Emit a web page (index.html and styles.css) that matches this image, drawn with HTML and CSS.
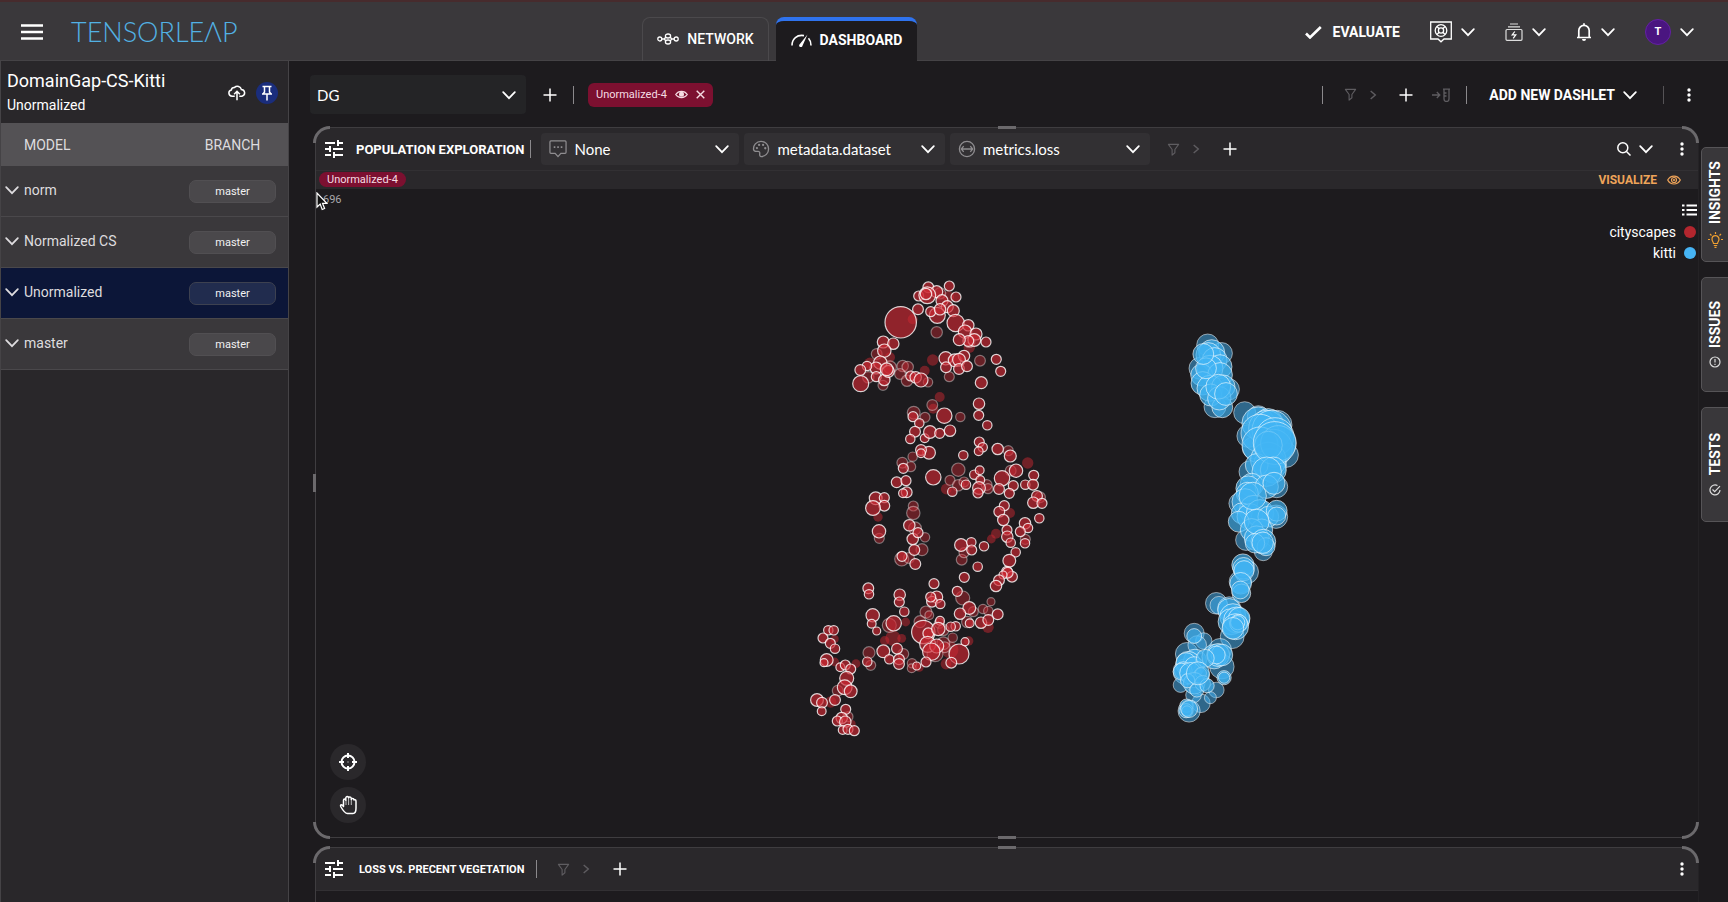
FILE: index.html
```html
<!DOCTYPE html>
<html lang="en">
<head>
<meta charset="utf-8">
<title>Tensorleap - Dashboard</title>
<link rel="stylesheet" href="styles.css">
</head>
<body>
<svg class="sprite" aria-hidden="true">
  <symbol id="chevron" viewBox="0 0 12 12"><path d="M1 3.500 6 8.700 11 3.500" fill="none" stroke="currentColor" stroke-width="1.500" stroke-linecap="round"/></symbol>
  <symbol id="next" viewBox="0 0 12 12"><path d="M4 2.500 8 6 4 9.500" fill="none" stroke="currentColor" stroke-width="1.200"/></symbol>
  <symbol id="plus" viewBox="0 0 14 14"><path d="M7 .5v13M.5 7h13" stroke="currentColor" stroke-width="1.500"/></symbol>
  <symbol id="dots" viewBox="0 0 14 14"><g fill="currentColor"><circle cx="7" cy="2" r="1.700"/><circle cx="7" cy="7" r="1.700"/><circle cx="7" cy="12" r="1.700"/></g></symbol>
  <symbol id="funnel" viewBox="0 0 14 14"><path d="M1.500 1.500h11L8.500 7v3.500L5.500 13V7z" fill="none" stroke="currentColor" stroke-width="1.200" stroke-linejoin="round"/></symbol>
  <symbol id="tune" viewBox="0 0 24 24"><path fill="currentColor" d="M3 17v2h6v-2H3zM3 5v2h10V5H3zm10 16v-2h8v-2h-8v-2h-2v6h2zM7 9v2H3v2h4v2h2V9H7zm14 4v-2H11v2h10zm-6-4h2V7h4V5h-4V3h-2v6z"/></symbol>
</svg>

<header class="topbar">
  <div class="brand">
    <button class="icon-button" aria-label="Menu"><svg width="22" height="16" viewBox="0 0 22 16"><path d="M0 1.500h22M0 8h22M0 14.500h22" stroke="#fff" stroke-width="2.400"/></svg></button>
    <a class="logo" href="#">TENSORLEΛP</a>
  </div>
  <nav class="tabs">
    <a class="tab" href="#">
      <svg width="22" height="12" viewBox="0 0 22 12" fill="none" stroke="currentColor" stroke-width="1.300"><circle cx="2.800" cy="6" r="2"/><circle cx="19.200" cy="6" r="2"/><ellipse cx="11" cy="3" rx="2.600" ry="2"/><ellipse cx="11" cy="9" rx="2.600" ry="2"/><path d="M4.800 6h2.500M17.200 6h-2.500M7.300 6 8.900 4M7.300 6l1.600 2M14.700 6l-1.600-2M14.700 6l-1.600 2"/></svg>
      NETWORK</a>
    <a class="tab tab-active" href="#">
      <svg width="21" height="14" viewBox="0 0 21 14" fill="none" stroke="currentColor" stroke-width="1.600"><path d="M1 12.500C1 5.500 6 1.500 13 2.600M17.500 5.300c1.700 1.800 2.500 4.200 2.500 7.200"/><path d="m16.500 1.500-7.800 9.700a1.700 1.700 0 1 0 2.800 1.500z" fill="currentColor" stroke="none"/></svg>
      DASHBOARD</a>
  </nav>
  <div class="top-actions">
    <button class="evaluate"><svg width="17" height="13" viewBox="0 0 17 13"><path d="m1 7.500 4 4L15.800 1" fill="none" stroke="#fff" stroke-width="2.600"/></svg>EVALUATE</button>
    <button class="menu-button" aria-label="Help"><svg width="22" height="22" viewBox="0 0 22 22" fill="none" stroke="#fff" stroke-width="1.300"><path d="M.7 1h20.600v17h-7.300L11 20.800 8 18H.7z"/><circle cx="11" cy="9.500" r="5.800"/><circle cx="11" cy="9.500" r="2.600"/><path d="m7 5.500 2.200 2.200M15 5.500l-2.200 2.200M7 13.500l2.200-2.200M15 13.500l-2.200-2.200"/></svg><svg class="chevron"><use href="#chevron"/></svg></button>
    <button class="menu-button" aria-label="Jobs"><svg width="18" height="18" viewBox="0 0 18 18" fill="none" stroke="#ddd" stroke-width="1.200"><path d="M5 1h8M3 3.800h12"/><rect x="1" y="6.500" width="16" height="10.800" rx="1"/><path d="m9.800 8.500-2.600 3.300h3.600l-2.600 3.500" stroke="#fff"/></svg><svg class="chevron"><use href="#chevron"/></svg></button>
    <button class="menu-button" aria-label="Notifications"><svg width="16" height="18" viewBox="0 0 16 18"><path d="M1 14.500h14M2.800 14.500V7.500a5.200 5.200 0 0 1 10.400 0v7M8 .3v2" fill="none" stroke="#fff" stroke-width="1.700"/><path d="M6 16h4a2 2 0 0 1-4 0z" fill="#fff"/></svg><svg class="chevron"><use href="#chevron"/></svg></button>
    <button class="menu-button" aria-label="Account"><span class="avatar">T</span><svg class="chevron"><use href="#chevron"/></svg></button>
  </div>
</header>

<div class="workspace">
  <aside class="sidebar">
    <div class="project">
      <div class="project-names"><h1>DomainGap-CS-Kitti</h1><p>Unormalized</p></div>
      <button class="icon-button" aria-label="Upload"><svg width="18" height="16" viewBox="0 0 20 17" fill="none" stroke="#fff" stroke-width="1.700"><path d="M7.500 12H4.500a3.500 3.500 0 0 1-.8-6.900A3.300 3.300 0 0 1 7.300 2.300a4.500 4.500 0 0 1 7.500 2.200 3.800 3.800 0 0 1 .7 7.500H12.500M10 16.500V7M6.800 9.800 10 6.600l3.200 3.200"/></svg></button>
      <button class="pin" aria-label="Pin"><svg width="12" height="16" viewBox="0 0 12 16" fill="none" stroke="#fff" stroke-width="1.500"><path d="M1.500 1.500h9M3.500 1.500v6M8.500 1.500v6M1 9h10M3.500 7 2 9M8.500 7 10 9M6 9v6.500"/></svg></button>
    </div>
    <table class="models">
      <thead><tr><th class="model-head">MODEL</th><th class="branch-cell">BRANCH</th></tr></thead>
      <tbody>
        <tr><td><button class="model"><svg class="chevron"><use href="#chevron"/></svg>norm</button></td><td class="branch-cell"><span class="branch">master</span></td></tr>
        <tr><td><button class="model"><svg class="chevron"><use href="#chevron"/></svg>Normalized CS</button></td><td class="branch-cell"><span class="branch">master</span></td></tr>
        <tr class="selected"><td><button class="model"><svg class="chevron"><use href="#chevron"/></svg>Unormalized</button></td><td class="branch-cell"><span class="branch">master</span></td></tr>
        <tr><td><button class="model"><svg class="chevron"><use href="#chevron"/></svg>master</button></td><td class="branch-cell"><span class="branch">master</span></td></tr>
      </tbody>
    </table>
  </aside>

  <main class="main">
    <div class="toolbar">
      <div class="select select-board"><select aria-label="Dashboard"><option>DG</option></select><svg class="chevron"><use href="#chevron"/></svg></div>
      <button class="icon-button" aria-label="Add dashboard"><svg class="glyph"><use href="#plus"/></svg></button>
      <span class="divider"></span>
      <span class="chip">Unormalized-4
        <button class="icon-button" aria-label="Toggle visibility"><svg width="13" height="9" viewBox="0 0 13 9"><path d="M.7 4.500C3.500.3 9.500.3 12.300 4.500 9.500 8.700 3.500 8.700.7 4.500z" fill="none" stroke="#f5dce3" stroke-width="1.200"/><circle cx="6.500" cy="4.200" r="2.500" fill="#f5dce3"/></svg></button>
        <button class="icon-button" aria-label="Remove"><svg width="9" height="9" viewBox="0 0 9 9"><path d="m.7.7 7.600 7.600M8.300.7.7 8.300" stroke="#f5dce3" stroke-width="1.400"/></svg></button>
      </span>
      <div class="toolbar-end">
        <span class="divider"></span>
        <button class="filter muted" aria-label="Filter"><svg class="funnel"><use href="#funnel"/></svg><svg class="chevron"><use href="#next"/></svg></button>
        <button class="icon-button" aria-label="Add filter"><svg class="glyph"><use href="#plus"/></svg></button>
        <button class="icon-button muted" aria-label="Create test"><svg width="18" height="14" viewBox="0 0 18 14" fill="none" stroke="currentColor" stroke-width="1.300"><path d="M0 7h7.500M4.800 4l3 3-3 3M11 1.200h7M12 1.500v9.500a2.400 2.400 0 0 0 5 0V1.500M12 5h2.500M12 8h2.500"/></svg></button>
        <span class="divider"></span>
        <button class="add-dashlet">ADD NEW DASHLET<svg class="chevron"><use href="#chevron"/></svg></button>
        <span class="divider divider-dim"></span>
        <button class="icon-button" aria-label="More"><svg class="glyph"><use href="#dots"/></svg></button>
      </div>
    </div>

    <div class="board">
      <div class="dashlets">
        <section class="dashlet dashlet-large">
          <span class="corner top-left"></span><span class="corner top-right"></span><span class="corner bottom-left"></span><span class="corner bottom-right"></span>
          <span class="grip grip-top"></span><span class="grip grip-bottom"></span><span class="grip-left"></span>
          <div class="dashlet-head">
            <button class="icon-button" aria-label="Settings"><svg class="tune"><use href="#tune"/></svg></button>
            <h2>POPULATION EXPLORATION</h2>
            <span class="divider"></span>
            <div class="fields">
              <div class="select"><svg class="field-icon" viewBox="0 0 19 19" fill="none" stroke="currentColor" stroke-width="1.300"><path d="M2 1h15a1 1 0 0 1 1 1v11a1 1 0 0 1-1 1h-4.500L9.500 17.500 6.500 14H2a1 1 0 0 1-1-1V2a1 1 0 0 1 1-1z"/><path d="M5 7.500h1.700M8.700 7.500h1.700M12.400 7.500h1.700" stroke-width="1.700"/></svg><select aria-label="Label"><option>None</option></select><svg class="chevron"><use href="#chevron"/></svg></div>
              <div class="select"><svg class="field-icon" viewBox="0 0 19 19" fill="none" stroke="currentColor" stroke-width="1.400"><path d="M9.500 17.500c-1.500-.2-1.500-2-1.300-3.300.2-1.500-.7-2.300-2-2.200-2 .2-4.200.3-4.500-1.800C1 5.500 4.700 1.500 9.500 1.500s8 3.500 8 8-3.500 8-8 8z"/><g fill="currentColor" stroke="none"><circle cx="5.200" cy="8.500" r="1.200"/><circle cx="7.500" cy="5.200" r="1.200"/><circle cx="11.700" cy="5.200" r="1.200"/><circle cx="14" cy="8.700" r="1.200"/></g></svg><select aria-label="Color"><option>metadata.dataset</option></select><svg class="chevron"><use href="#chevron"/></svg></div>
              <div class="select"><svg class="field-icon" viewBox="0 0 19 19" fill="none" stroke="currentColor" stroke-width="1.400"><circle cx="9.500" cy="9.500" r="8"/><path d="M4 9.500h11M6 6.500 3.500 9.500 6 12.500M13 6.500l2.500 3-2.500 3"/></svg><select aria-label="Size"><option>metrics.loss</option></select><svg class="chevron"><use href="#chevron"/></svg></div>
            </div>
            <button class="filter muted" aria-label="Filter"><svg class="funnel"><use href="#funnel"/></svg><svg class="chevron"><use href="#next"/></svg></button>
            <button class="icon-button" aria-label="Add filter"><svg class="glyph"><use href="#plus"/></svg></button>
            <div class="head-end">
              <button class="search" aria-label="Search"><svg width="14" height="14" viewBox="0 0 14 14"><g fill="none" stroke="#fff" stroke-width="1.500"><circle cx="5.800" cy="5.800" r="5"/><path d="m9.500 9.500 4 4"/></g></svg><svg class="chevron"><use href="#chevron"/></svg></button>
              <button class="icon-button" aria-label="More"><svg class="glyph"><use href="#dots"/></svg></button>
            </div>
          </div>
          <div class="dashlet-sub">
            <span class="chip chip-small">Unormalized-4</span>
            <button class="visualize">VISUALIZE<svg width="14" height="10" viewBox="0 0 14 10" fill="none" stroke="currentColor" stroke-width="1.200"><path d="M.7 5C3.500-.3 10.500-.3 13.300 5 10.500 10.300 3.500 10.300.7 5z"/><circle cx="7" cy="5" r="2.500"/><circle cx="7" cy="5" r=".5"/></svg></button>
          </div>
          <div class="plot">
            <svg class="scatter" id="scatter" viewBox="316 189 1382 648" role="img" aria-label="Population scatter plot"></svg>
            <span class="count">696</span>
            <div class="legend">
              <button class="icon-button" aria-label="Legend"><svg width="15" height="12" viewBox="0 0 15 12"><path d="M0 1.500h2.500M0 6h2.500M0 10.500h2.500M4.500 1.500H15M4.500 6H15M4.500 10.500H15" stroke="#fff" stroke-width="2"/></svg></button>
              <span class="legend-item">cityscapes<i class="swatch swatch-red"></i></span>
              <span class="legend-item">kitti<i class="swatch swatch-blue"></i></span>
            </div>
            <div class="plot-tools">
              <button aria-label="Center"><svg width="18" height="18" viewBox="0 0 18 18" fill="none" stroke="#fff" stroke-width="2"><circle cx="9" cy="9" r="6.500"/><path d="M9 0v5M9 13v5M0 9h5M13 9h5"/><path d="M8.500 9h1" stroke-width="1"/></svg></button>
              <button aria-label="Pan"><svg width="18" height="20" viewBox="0 0 18 20" fill="none" stroke="#fff" stroke-width="1.500" stroke-linejoin="round"><path d="M4.500 11.500V5.200c0-1.600 2.300-1.600 2.300 0V3c0-1.900 2.800-1.900 2.800 0 0-1.500 2.700-1.500 2.700.4v1.200c0-1.500 2.600-1.500 2.700.3 1.200-.6 2 .2 2 1.500V13c0 3.500-1.500 5.500-3 5.500H8.500c-2.500 0-4-2-6.500-6.500-1.500-3 1-3 2.500-.5z"/><path d="M7 5v5M9.600 3.500V10M12.300 4.500V10" stroke-width=".7"/></svg></button>
            </div>
            <svg class="cursor" width="12" height="19" viewBox="0 0 12 19"><path d="M1 1v14l3.200-3 2 5.500 2.400-1-2.100-5.200h4.300z" fill="#111" stroke="#fff" stroke-width="1.200"/></svg>
          </div>
        </section>

        <section class="dashlet dashlet-peek">
          <span class="corner top-left"></span><span class="corner top-right"></span><span class="grip grip-top"></span>
          <div class="dashlet-head">
            <button class="icon-button" aria-label="Settings"><svg class="tune"><use href="#tune"/></svg></button>
            <h2>LOSS VS. PRECENT VEGETATION</h2>
            <span class="divider"></span>
            <button class="filter muted" aria-label="Filter"><svg class="funnel"><use href="#funnel"/></svg><svg class="chevron"><use href="#next"/></svg></button>
            <button class="icon-button" aria-label="Add filter"><svg class="glyph"><use href="#plus"/></svg></button>
            <div class="head-end"><button class="icon-button" aria-label="More"><svg class="glyph"><use href="#dots"/></svg></button></div>
          </div>
        </section>
      </div>

      <div class="rail">
        <button class="rail-tab"><span>INSIGHTS</span><svg width="15" height="16" viewBox="0 0 15 16" fill="none" stroke="#f0a030" stroke-width="1.200"><path d="M5.500 11.500C5.500 10 4 9.300 4 7.200a3.500 3.500 0 0 1 7 0c0 2.100-1.500 2.800-1.500 4.300zM5.800 13.500h3.400M6.500 15.300h2M7.500 0v2M0 7.500h2M13 7.500h2M2 2l1.500 1.500M13 2l-1.500 1.500"/></svg></button>
        <button class="rail-tab"><span>ISSUES</span><svg width="12" height="12" viewBox="0 0 12 12" fill="none" stroke="#ddd" stroke-width="1.200"><circle cx="6" cy="6" r="5"/><path d="M6 3v3.500M6 7.800V9"/></svg></button>
        <button class="rail-tab"><span>TESTS</span><svg width="12" height="12" viewBox="0 0 12 12" fill="none" stroke="#ddd" stroke-width="1.200"><path d="M8.500 1.600A5 5 0 1 0 11 6M3.500 5.500l2.200 2.200 5.300-5.500"/></svg></button>
      </div>
    </div>
  </main>
</div>
<script src="scatter.js"></script>
</body>
</html>
```
FILE: styles.css
```css
* { box-sizing: border-box; }
body {
  margin: 0;
  height: 100vh;
  overflow: hidden;
  display: flex;
  flex-direction: column;
  background: #1d1b1e;
  color: #fff;
  font-family: Roboto, "Liberation Sans", sans-serif;
  font-size: 14px;
}
button { display: inline-flex; align-items: center; justify-content: center; margin: 0; padding: 0; border: 0; background: none; color: inherit; font: inherit; }
a { color: inherit; text-decoration: none; }
h1, h2, p { margin: 0; font-weight: 400; }
svg { display: block; flex: none; }
.sprite { position: absolute; width: 0; height: 0; }
.chevron { width: 14px; height: 14px; }
.glyph { width: 14px; height: 14px; }
.funnel { width: 13px; height: 13px; }
.tune { width: 24px; height: 24px; }
.muted { color: #5f5d61; }

.topbar {
  flex: none;
  display: grid;
  grid-template-columns: 37% auto 1fr;
  height: 61px;
  background: #3a383b;
  border-top: 2px solid #472b2d;
  border-bottom: 1px solid #454346;
}
.brand { display: flex; align-items: center; gap: 28px; padding: 2px 0 0 21px; }
.logo { color: #52b1e4; font-family: Lato, sans-serif; font-size: 27px; font-weight: 300; line-height: 30px; }
.tabs { display: flex; gap: 7px; margin: 15px 0 -1px 3px; }
.tab { display: flex; align-items: center; gap: 8px; padding: 0 14px 2px; border: 1px solid #4b494c; border-bottom: 0; border-radius: 8px 8px 0 0; font-weight: 500; }
.tab-active { padding: 0 15px 2px; background: #1d1b1e; border: 0; border-top: 4px solid #2f73ee; font-weight: 700; }
.top-actions { display: flex; align-items: center; justify-content: flex-end; gap: 30px; padding: 2px 34px 0 0; }
.evaluate { gap: 11px; font-weight: 700; }
.menu-button { gap: 9px; }
.avatar { width: 26px; height: 26px; border-radius: 50%; background: #4a1580; border: 1px solid #6420a5; font-size: 11px; font-weight: 700; line-height: 24px; }

.workspace { flex: 1; min-height: 0; display: flex; }
.sidebar { flex: none; width: 289px; background: #29272a; border-right: 1px solid #454346; border-left: 1px solid #454346; }
.project { display: flex; align-items: center; gap: 10px; height: 62px; padding: 2px 10px 0 6px; }
.project-names { flex: 1; }
.project h1 { font-size: 18px; line-height: 24px; }
.project p { font-size: 14px; line-height: 24px; }
.pin { width: 22px; height: 22px; border-radius: 50%; background: #1a2d7c; }
.icon-button { flex: none; }

.models { width: 100%; border-collapse: separate; border-spacing: 0; color: #dedcdf; }
.models th { height: 43px; padding: 0; background: #545255; font-weight: 400; text-align: left; }
.models .model-head { padding-left: 23px; }
.models td { height: 51px; padding: 0; background: #3a383b; border-bottom: 1px solid #4a484b; }
.models .selected td { background: #0c1638; }
.models .branch-cell { width: 111px; text-align: center; }
.model { gap: 5px; padding-left: 4px; }
.branch { display: block; width: 87px; margin: 0 auto; border: 1px solid #514f52; border-radius: 7px; background: #4a484b; font-size: 11px; line-height: 21px; color: #f2f2f2; }
.selected .branch { background: #212c4e; border-color: #3d4150; }

.main { flex: 1; min-width: 0; display: flex; flex-direction: column; padding-left: 21px; }
.toolbar { flex: none; display: flex; align-items: center; height: 66px; padding: 1px 32px 0 0; }
.toolbar > .icon-button { margin: 0 16px 0 17px; }
.divider { flex: none; width: 1px; height: 18px; background: #8b898c; }
.divider-dim { background: #555356; }
.select { position: relative; display: flex; align-items: center; }
.select select { appearance: none; width: 100%; height: 100%; border: 0; border-radius: 4px; background: #323033; color: #fff; font-family: Lato, sans-serif; font-size: 15px; outline: 0; }
.select .chevron { position: absolute; right: 10px; pointer-events: none; }
.select-board { width: 216px; height: 39px; }
.select-board select { padding-left: 7px; background: #242426; }
.chip { display: flex; align-items: center; gap: 8px; margin-left: 14px; padding: 0 8px; height: 24px; border-radius: 6px; background: #7c1030; color: #f5dce3; font-size: 11px; }
.toolbar-end { margin-left: auto; display: flex; align-items: center; }
.filter { gap: 9px; }
.toolbar-end .filter { margin: 0 19px 0 21px; }
.toolbar-end .muted.icon-button { margin: 0 16px 0 19px; }
.add-dashlet { gap: 8px; margin: 0 26px 0 22px; font-weight: 700; }
.toolbar-end .divider-dim + .icon-button { margin-left: 18px; }

.board { flex: 1; min-height: 0; display: flex; gap: 2px; }
.dashlets { flex: 1; min-width: 0; display: flex; flex-direction: column; gap: 9px; padding-left: 5px; }
.dashlet { position: relative; display: flex; flex-direction: column; border: 1px solid #3f3d40; border-right-color: #242225; border-radius: 16px; }
.dashlet-large { flex: 1; min-height: 0; }
.dashlet-peek { flex: 0 0 55px; border-bottom: 0; border-radius: 16px 16px 0 0; }
.corner { position: absolute; width: 17px; height: 17px; border: 0 solid #6b696c; }
.top-left { top: -2px; left: -3px; border-width: 3px 0 0 3px; border-top-left-radius: 17px; }
.top-right { top: -2px; right: -1px; border-width: 3px 3px 0 0; border-top-right-radius: 17px; }
.bottom-left { bottom: -2px; left: -3px; border-width: 0 0 3px 3px; border-bottom-left-radius: 17px; }
.bottom-right { bottom: -2px; right: -1px; border-width: 0 3px 3px 0; border-bottom-right-radius: 17px; }
.grip { position: absolute; left: 50%; width: 18px; height: 3px; margin-left: -9px; background: #6b696c; }
.grip-top { top: -2px; }
.grip-bottom { bottom: -2px; }
.grip-left { position: absolute; left: -3px; top: 50%; width: 3px; height: 18px; margin-top: -9px; background: #6b696c; }
.dashlet-head { flex: none; display: flex; align-items: center; height: 43px; padding: 0 9px 0 6px; background: #2a282b; border-bottom: 1px solid #323033; border-radius: 15px 15px 0 0; }
.dashlet-head h2 { margin: 0 6px 0 10px; font-size: 13px; font-weight: 700; }
.dashlet-peek h2 { margin: 0 12px 0 13px; font-size: 11px; }
.fields { flex: 0 1 609px; display: grid; grid-template-columns: 198px 1fr 1fr; gap: 5px; height: 32px; margin-left: 10px; }
.field-icon { position: absolute; left: 8px; width: 18px; height: 18px; color: #8f8d90; z-index: 1; }
.fields select { padding-left: 33px; }
.dashlet-head .filter { margin: 0 20px 0 17px; }
.dashlet-peek .filter { margin-left: 20px; }
.head-end { margin-left: auto; display: flex; align-items: center; gap: 22px; }
.search { gap: 8px; }
.dashlet-sub { flex: none; display: flex; align-items: center; justify-content: space-between; height: 18px; padding-right: 17px; background: #2a282b; }
.chip-small { height: 15px; margin: 0 0 2px 3px; padding: 0 8px; border-radius: 8px; }
.visualize { gap: 10px; color: #efa459; font-size: 12px; font-weight: 700; }

.plot { position: relative; flex: 1; min-height: 0; }
.scatter { width: 100%; height: 100%; }
.count { position: absolute; left: 7px; top: 4px; color: #aaa8ab; font-size: 11px; line-height: 14px; }
.cursor { position: absolute; left: 0; top: 3px; }
.legend { position: absolute; top: 15px; right: 1px; display: flex; flex-direction: column; align-items: flex-end; gap: 7px; }
.legend-item { display: flex; align-items: center; gap: 8px; padding-right: 1px; line-height: 14px; }
.legend-item:nth-child(2) { margin-top: 2px; }
.swatch { width: 12px; height: 12px; border-radius: 50%; }
.swatch-red { background: #b3262e; }
.swatch-blue { background: #46b4f5; }
.plot-tools { position: absolute; left: 14px; bottom: 14px; display: flex; flex-direction: column; gap: 7px; }
.plot-tools button { width: 36px; height: 36px; border-radius: 50%; background: #2a282b; }

.rail { flex: none; width: 27px; display: flex; flex-direction: column; gap: 15px; padding-top: 20px; }
.rail-tab { flex-direction: column; gap: 8px; width: 28px; height: 115px; border: 1px solid #565457; border-radius: 5px 0 0 5px; background: #39373a; font-weight: 700; }
.rail-tab span { writing-mode: vertical-rl; transform: rotate(180deg); }

.red { fill: #cd2832; fill-opacity: .66; stroke: #fff; stroke-opacity: .8; stroke-width: 1.2; }
.red-dim { fill: #cd2832; fill-opacity: .42; stroke: #fff; stroke-opacity: .38; stroke-width: 1.2; }
.red-bare { fill: #cd2832; fill-opacity: .48; }
.blue { fill: #42b4f5; fill-opacity: .66; stroke: #fff; stroke-opacity: .6; }
.blue-dim { fill: #42b4f5; fill-opacity: .5; stroke: #fff; stroke-opacity: .5; }
```
FILE: scatter.js
```js
// Each cluster: origin, horizontal and vertical units per pixel,
// and flat x, y, radius triples per style.
const clusters = [
  { x: 840, y: 270, unitX: 3, unitY: 3, series: {
    "red-bare": [218,148,16, 388,232,18, 278,270,18, 254,302,16, 299,381,16, 280,416,16, 150,262,16, 90,280,18, 325,80,18],
    "red-dim": [290,187,18, 420,272,17, 328,320,16, 277,405,17, 221,428,20, 255,442,16, 361,441,15, 110,252,17, 85,322,18, 129,346,16, 188,288,18, 203,291,18, 180,312,17, 201,332,18, 264,337,15, 150,292,20, 388,215,18, 300,70,18],
    "red": [182,157,48, 328,48,16, 348,81,16, 265,52,17, 290,65,19, 236,78,16, 262,76,26, 258,72,18, 306,92,19, 322,110,19, 340,122,19, 234,118,17, 292,136,25, 272,125,16, 300,118,18, 347,159,27, 385,166,18, 375,185,21, 408,192,19, 403,210,20, 385,213,17, 358,209,19, 438,216,16, 130,216,19, 160,221,18, 133,242,21, 121,278,21, 108,294,19, 81,288,15, 61,300,17, 62,341,25, 109,320,16, 133,330,18, 145,304,19, 140,298,20, 212,318,16, 227,322,18, 243,330,22, 317,265,21, 344,271,20, 372,258,18, 357,269,20, 318,292,17, 357,297,17, 381,289,17, 469,268,16, 482,304,16, 424,338,19, 313,437,24, 219,440,16, 238,460,15, 225,485,17, 211,507,15, 254,505,14, 270,486,20, 299,490,16, 330,482,18, 417,401,18, 416,436,16, 442,466,15]
  }},
  { x: 800, y: 430, unitX: 3, unitY: 3, series: {
    "red-bare": [683,99,18, 630,249,16, 588,311,16, 574,327,14, 234,261,15, 439,177,17],
    "red-dim": [338,80,15, 307,98,17, 332,110,16, 475,119,21, 450,151,16, 475,166,18, 492,156,16, 560,165,17, 564,176,16, 625,62,16, 632,122,17, 340,228,16, 340,249,21, 375,322,15, 366,359,19, 305,387,22, 327,384,17, 345,295,20, 238,325,16, 485,389,17, 492,368,16, 676,328,16, 720,202,17],
    "red": [387,68,20, 363,60,17, 363,70,14, 310,115,16, 290,157,17, 318,152,16, 320,187,17, 309,190,14, 400,142,24, 490,76,15, 538,36,16, 548,52,15, 536,64,14, 593,57,18, 631,78,19, 523,134,15, 539,121,14, 541,150,14, 498,164,15, 457,185,15, 537,174,20, 534,189,16, 606,145,24, 648,122,21, 640,167,16, 597,177,17, 628,190,16, 676,164,15, 701,136,16, 699,164,17, 711,198,17, 700,218,18, 726,220,16, 718,265,15, 613,227,16, 598,245,17, 610,270,18, 621,300,16, 622,320,18, 632,338,15, 675,280,18, 684,294,15, 661,305,16, 675,340,15, 647,367,15, 628,392,20, 227,205,20, 253,203,16, 253,227,17, 219,234,23, 237,304,21, 328,286,18, 338,327,18, 354,308,16, 343,360,17, 306,379,16, 346,402,17, 483,345,20, 514,337,15, 515,360,16, 552,349,15, 533,410,15, 621,425,17]
  }},
  { x: 800, y: 570, unitX: 3, unitY: 3, series: {
    "red-bare": [564,172,18, 317,156,14, 254,212,15, 279,205,24, 305,205,14, 104,276,14, 168,281,14, 92,396,18, 104,207,13, 506,213,15, 358,292,14, 438,282,17, 155,462,13, 450,240,26],
    "red-dim": [488,84,22, 378,126,19, 388,136,14, 360,155,19, 418,160,16, 268,166,22, 207,248,19, 212,286,16, 310,252,17, 336,280,15, 335,295,14, 502,156,18, 549,117,15, 565,123,15, 573,95,13, 458,203,15, 430,220,20, 434,232,17, 405,251,25, 113,362,17, 144,440,16, 430,180,18, 520,125,16],
    "red": [493,22,16, 636,20,17, 623,8,17, 609,15,13, 597,31,17, 588,48,18, 402,41,16, 472,64,16, 205,55,17, 207,73,15, 218,136,21, 215,161,14, 230,183,13, 299,74,18, 298,96,16, 313,125,15, 410,81,19, 396,95,17, 421,102,15, 392,81,16, 508,114,20, 480,131,18, 593,133,17, 543,158,18, 565,150,17, 509,160,14, 467,169,15, 452,170,15, 420,152,14, 281,160,24, 370,186,36, 385,190,17, 415,177,21, 383,223,25, 410,228,22, 394,245,27, 477,252,31, 454,278,17, 495,215,13, 378,276,16, 350,288,13, 250,244,20, 291,236,17, 268,268,15, 297,268,17, 297,282,17, 202,275,15, 85,181,15, 101,181,15, 69,204,16, 91,220,16, 105,236,15, 80,270,20, 72,278,13, 121,292,14, 136,285,16, 152,297,16, 140,325,22, 134,352,23, 152,364,20, 105,390,17, 51,390,20, 66,398,17, 65,424,14, 137,418,16, 125,444,18, 112,453,16, 136,455,18, 128,480,14, 144,478,16, 163,482,16]
  }},
  { x: 1160, y: 320, unitX: 3, unitY: 3, series: {
    "blue-dim": [143,75,34, 185,100,33, 120,145,34, 206,208,33, 165,260,34, 254,278,34, 295,290,34, 265,348,35, 352,315,45, 378,405,38, 280,384,34, 270,455,34, 350,500,34, 238,550,32, 348,590,36, 258,660,32, 310,695,28],
    "blue": [155,98,40, 145,105,38, 164,120,38, 180,140,37, 150,145,40, 125,165,34, 180,165,38, 128,190,36, 150,205,40, 190,200,36, 152,225,34, 187,262,32, 178,235,36, 175,200,38, 138,145,32, 130,102,32, 198,222,35, 295,310,50, 325,310,45, 320,325,55, 335,330,60, 300,340,58, 345,350,58, 340,385,58, 300,375,55, 330,435,50, 325,420,54, 290,435,35, 355,370,54, 325,376,43, 344,369,65, 340,450,40, 320,455,45, 275,495,36, 265,505,38, 320,500,36, 342,490,34, 262,520,34, 255,545,40, 282,570,45, 245,580,32, 270,590,40, 300,580,42, 278,528,42, 325,590,32, 350,572,32, 350,588,28, 236,605,32, 305,630,34, 275,630,35, 290,655,38, 290,605,38, 310,665,38, 318,680,28, 285,670,30, 308,668,33]
  }},
  { x: 1150, y: 540, unitX: 2.713, unitY: 3, series: {
    "blue-dim": [180,190,30, 187,196,25, 262,96,33, 215,205,32, 223,290,33, 120,280,28, 146,303,23, 100,342,32, 98,395,36, 190,330,32, 195,380,34, 83,435,21, 138,490,26, 180,450,22, 118,465,22, 164,473,17, 245,125,31, 106,513,31, 128,315,26],
    "blue": [252,75,31, 254,85,30, 255,92,28, 246,130,30, 248,160,26, 245,150,25, 215,210,32, 225,230,36, 220,245,36, 235,240,36, 242,235,30, 232,260,36, 240,250,25, 238,248,20, 225,265,30, 120,288,21, 122,362,32, 104,372,35, 98,368,28, 120,380,28, 90,392,25, 86,395,24, 174,350,34, 185,345,32, 195,345,30, 180,345,25, 110,400,30, 140,405,22, 138,400,16, 120,430,30, 102,422,20, 143,430,22, 127,450,20, 155,437,20, 201,413,20, 201,413,16, 150,355,25, 130,400,32, 99,497,19, 98,512,20, 100,513,15, 106,507,24]
  }}
];

const svg = document.getElementById("scatter");
for (const { x, y, unitX, unitY, series } of clusters) {
  for (const [style, values] of Object.entries(series)) {
    for (let i = 0; i < values.length; i += 3) {
      const circle = document.createElementNS("http://www.w3.org/2000/svg", "circle");
      circle.setAttribute("class", style);
      circle.setAttribute("cx", (x + values[i] / unitX).toFixed(1));
      circle.setAttribute("cy", (y + values[i + 1] / unitY).toFixed(1));
      circle.setAttribute("r", (values[i + 2] / unitX - 0.3).toFixed(1));
      svg.append(circle);
    }
  }
}
```
